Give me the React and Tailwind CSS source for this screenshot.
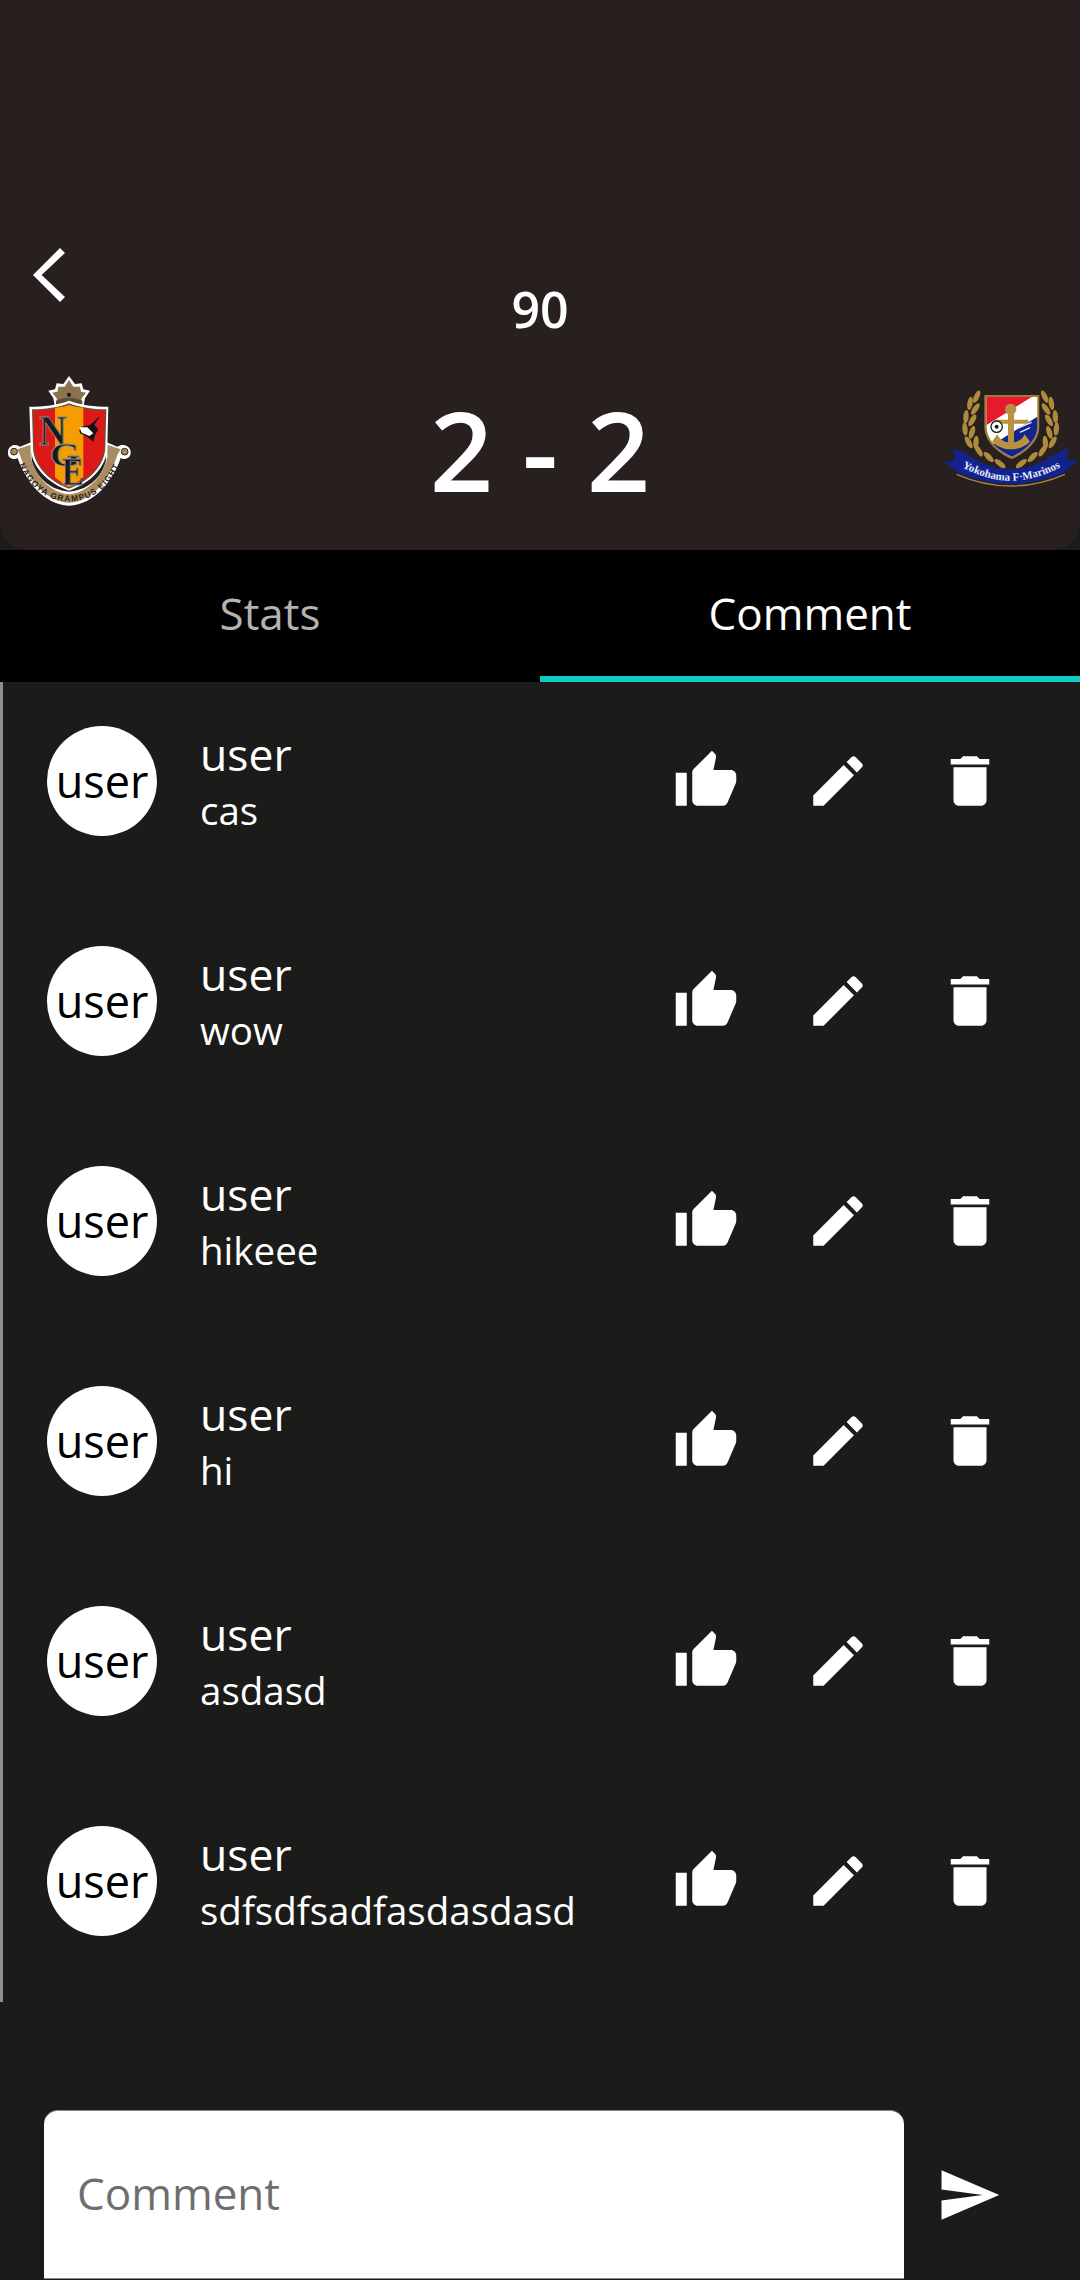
import React from 'react';

const comments = ['cas', 'wow', 'hikeee', 'hi', 'asdasd', 'sdfsdfsadfasdasdasd'];

function Icon({ d, className = '' }) {
  return (
    <svg viewBox="0 0 24 24" className={`h-[66px] w-[66px] shrink-0 fill-white ${className}`}>
      <path d={d} />
    </svg>
  );
}

const thumbUp = 'M1 21h4V9H1v12zm22-11c0-1.1-.9-2-2-2h-6.31l.95-4.57.03-.32c0-.41-.17-.79-.44-1.06L14.17 1 7.59 7.59C7.22 7.95 7 8.45 7 9v10c0 1.1.9 2 2 2h9c.83 0 1.54-.5 1.84-1.22l3.02-7.05c.09-.23.14-.47.14-.73v-2z';
const pencil = 'M3 17.25V21h3.75L17.81 9.94l-3.75-3.75L3 17.25zM20.71 7.04c.39-.39.39-1.02 0-1.41l-2.34-2.34c-.39-.39-1.02-.39-1.41 0l-1.83 1.83 3.75 3.75 1.83-1.83z';
const trash = 'M6 19c0 1.1.9 2 2 2h8c1.1 0 2-.9 2-2V7H6v12zM19 4h-3.5l-1-1h-5l-1 1H5v2h14V4z';
const send = 'M2.01 21L23 12 2.01 3 2 10l15 2-15 2z';

function GrampusCrest() {
  return (
    <svg viewBox="0 0 420 420" className="-mt-[5px] h-[140px] w-[140px] shrink-0 self-start">
      {/* ribbon */}
      <path d="M24 245C26 226 45 220 60 230L95 216V270C110 330 160 362 207 365 255 362 305 330 318 270V216L352 230C368 220 389 226 392 245 394 264 372 272 362 264 340 330 285 404 207 407 130 404 75 330 53 264 42 272 21 264 24 245Z" fill="#fff" />
      <path d="M52 238L92 224V262C110 330 160 370 207 373 255 370 305 330 322 262V224L362 238 352 255C330 325 280 395 207 398 135 395 82 325 60 255Z" fill="#a88c62" />
      <circle cx="42" cy="245" r="10" fill="#a88c62" stroke="#2a2015" strokeWidth="3" />
      <circle cx="374" cy="245" r="10" fill="#a88c62" stroke="#2a2015" strokeWidth="3" />
      {/* crown */}
      <path d="M207 18L225 42 245 40 250 58 270 62 255 85 250 112H165L160 85 145 62 165 58 170 40 190 42Z" fill="#fff" />
      <path d="M207 30L220 50 240 50 243 65 258 68 245 85 243 105H172L170 85 157 68 172 65 175 50 194 50Z" fill="#8c7350" />
      <path d="M168 92C195 80 220 80 247 92V108H168Z" fill="#5e4c34" />
      <circle cx="207" cy="74" r="6" fill="#141414" />
      {/* shield */}
      <path d="M88 110C130 110 175 105 207 92 240 105 285 110 325 110L322 230C322 290 270 340 207 362 145 340 92 290 92 230Z" fill="#fff" />
      <path d="M96 118C135 118 175 113 207 100 240 113 280 118 319 118L316 230C316 287 265 335 207 356 150 335 99 287 99 230Z" fill="#6b5234" />
      <path d="M100 122C135 122 175 117 207 105 240 117 280 122 315 122L312 230C312 285 262 332 207 352 152 332 103 285 103 230Z" fill="#dd1818" />
      <path d="M165 113C180 111 195 110 207 105 220 110 235 112 250 113V322C235 335 220 345 207 352 195 345 180 335 165 322Z" fill="#f59d00" />
      {/* NGE monogram */}
      <text x="118" y="226" fontFamily="Liberation Serif, serif" fontWeight="700" fontSize="128" fill="#1a1a1a" stroke="#8a8a8a" strokeWidth="2.5" textLength="82" lengthAdjust="spacingAndGlyphs">N</text>
      <text x="150" y="288" fontFamily="Liberation Serif, serif" fontWeight="700" fontSize="102" fill="#1a1a1a" stroke="#8a8a8a" strokeWidth="2.5" textLength="90" lengthAdjust="spacingAndGlyphs">G</text>
      <text x="185" y="346" fontFamily="Liberation Serif, serif" fontWeight="700" fontSize="120" fill="#1a1a1a" stroke="#8a8a8a" strokeWidth="2.5" textLength="66" lengthAdjust="spacingAndGlyphs">E</text>
      {/* orca */}
      <path d="M300 138L270 165 245 170 238 180 240 190 262 200 280 215 285 195 295 178 283 165Z" fill="#111" />
      <path d="M238 172L262 172 280 190 268 198 245 188Z" fill="#fff" />
      {/* ribbon lettering */}
      <path id="grampus-arc" d="M48 262C80 347 135 394 207 394 280 394 335 347 367 262" fill="none" />
      <text fontFamily="Liberation Sans, sans-serif" fontSize="25" fontWeight="700" fill="#2a2015" letterSpacing="3.5">
        <textPath href="#grampus-arc" startOffset="50%" textAnchor="middle">NAGOYA GRAMPUS EIGHT</textPath>
      </text>
    </svg>
  );
}

const laurel = [
  [110, 35, 25], [90, 55, 10], [106, 72, 35], [78, 95, 5], [97, 106, 30], [75, 132, -5],
  [96, 142, 18], [86, 172, -30], [108, 172, 5], [116, 197, -32], [146, 216, -45], [180, 236, -52],
];

function MarinosCrest() {
  return (
    <svg viewBox="0 0 420 330" className="mt-[10px] h-[110px] w-[140px] shrink-0 self-start">
      {/* laurel */}
      {laurel.map(([x, y, r], i) => (
        <g key={i} fill="#ae8a3c">
          <ellipse cx={x} cy={y} rx="8" ry="20" transform={`rotate(${r} ${x} ${y})`} />
          <ellipse cx={424 - x} cy={y} rx="8" ry="20" transform={`rotate(${-r} ${424 - x} ${y})`} />
        </g>
      ))}
      {/* shield */}
      <path d="M133 30H298V125C298 170 255 205 215 222 175 205 133 170 133 125Z" fill="#9c7c35" />
      <path d="M140 36H292V125C292 166 252 199 215 215 178 199 140 166 140 125Z" fill="#fff" />
      <path d="M140 36H275L140 120Z" fill="#e8192c" />
      <path d="M292 95V125C292 166 252 199 215 215 195 206 175 194 160 178Z" fill="#13258c" />
      {/* anchor */}
      <circle cx="212" cy="73" r="17" fill="#b9913f" />
      <path d="M204 88H222V104H265V116H222V172C235 170 248 163 254 148L270 170C256 184 235 193 213 193 191 193 170 184 156 170L172 148C178 163 191 170 204 172V116H165V104H204Z" fill="#b9913f" />
      <circle cx="170" cy="125" r="17" fill="#fff" stroke="#1c1c1c" strokeWidth="4" />
      <circle cx="170" cy="125" r="6" fill="#1c1c1c" />
      <path d="M232 130L275 112M240 142L270 128" stroke="#dfe6ff" strokeWidth="4" fill="none" />
      {/* banner */}
      <path d="M40 188L95 215C130 240 170 252 213 252 256 252 295 240 330 215L385 188 380 225 415 232 385 248 375 262C320 285 265 297 213 297 160 297 105 285 50 262L40 248 10 232 45 225Z" fill="#12238e" />
      <path d="M50 268C105 292 160 303 213 303 265 303 320 292 375 268" fill="none" stroke="#a8873c" strokeWidth="4" />
      <path id="marinos-arc" d="M50 238C110 272 160 287 213 287 265 287 315 272 378 238" fill="none" />
      <text fontFamily="Liberation Serif, serif" fontSize="33" fontWeight="700" fill="#e6ebff">
        <textPath href="#marinos-arc" startOffset="50%" textAnchor="middle">Yokohama F·Marinos</textPath>
      </text>
    </svg>
  );
}

function CommentRow({ text }) {
  return (
    <div className="flex h-[220px] items-start pt-[44px]">
      <div className="ml-[44px] flex h-[110px] w-[110px] shrink-0 items-center justify-center rounded-full bg-white text-[45px] text-black">
        user
      </div>
      <div className="ml-[43px] flex h-[110px] min-w-0 flex-1 flex-col justify-center pb-[4px]">
        <p className="text-[44.5px] leading-[61px] text-white">user</p>
        <p className="text-[38.5px] leading-[52px] text-white">{text}</p>
      </div>
      <div className="mr-[77px] flex h-[110px] shrink-0 items-center gap-[66px]">
        <Icon d={thumbUp} />
        <Icon d={pencil} />
        <Icon d={trash} />
      </div>
    </div>
  );
}

export default function App() {
  return (
    <div className="relative h-[2280px] w-[1080px] overflow-hidden bg-[#1b1b1a] font-['Open_Sans',sans-serif]">
      <header className="relative flex h-[550px] flex-col items-center rounded-b-[28px] bg-[#281f1f] pt-[276px]">
        <svg viewBox="0 0 36 56" className="absolute left-[32px] top-[247px] h-[56px] w-[36px] fill-white">
          <path d="M28 1L33 6 9.6 28 33 50 28 55 1 28Z" />
        </svg>
        <p className="text-[50px] leading-[66px] font-semibold text-white">90</p>
        <div className="mt-[33px] flex h-[148px] w-full items-center justify-between">
          <GrampusCrest />
          <p className="text-[111px] leading-[148px] font-semibold text-white">2 - 2</p>
          <MarinosCrest />
        </div>
      </header>

      <nav className="flex h-[132px] bg-black">
        <div className="flex flex-1 items-center justify-center pb-[6px] text-[44px] text-[#b3b3b3]">Stats</div>
        <div className="flex flex-1 items-center justify-center border-b-[6px] border-[#0ccbc0] text-[44px] text-white">Comment</div>
      </nav>

      <div className="border-l-[3px] border-[#8f8f8f]">
        {comments.map((text, i) => (
          <CommentRow key={i} text={text} />
        ))}
      </div>

      <div className="mt-[108px] flex items-center">
        <div className="ml-[44px] flex h-[169px] w-[860px] items-center rounded-t-[14px] border-y-[1px] border-[#8a8a8a] bg-white pb-[3px] pl-[33px] text-[44px] text-[#6e6e6e]">
          Comment
        </div>
        <Icon d={send} className="ml-[32px]" />
      </div>
    </div>
  );
}
